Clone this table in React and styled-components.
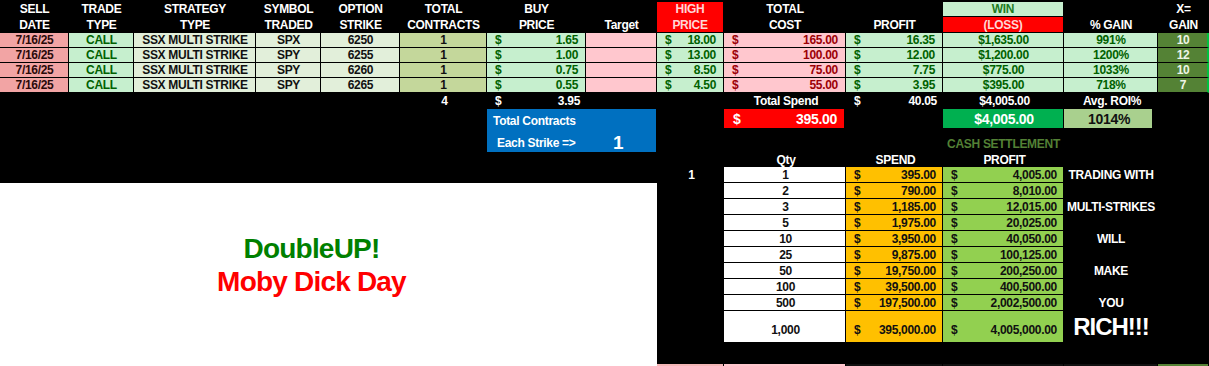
import React from 'react'
import styled, { createGlobalStyle } from 'styled-components'

const GOOD = '#C6EFCE'
const GOOD_TXT = '#006100'
const BAD = '#FFC7CE'
const BAD_TXT = '#9C0006'
const PALE = '#E2EFDA'
const OLIVE = '#C4D79B'
const SALMON = '#F2A4A4'
const DEEP = '#548235'

const GlobalStyle = createGlobalStyle`
  body {
    margin: 0;
    background: #fff;
    font-family: 'Liberation Sans', Arial, sans-serif;
  }
`

// one sheet grid, column widths taken from the spreadsheet
const Sheet = styled.div`
  width: 1209px;
  height: 366px;
  display: grid;
  grid-template-columns: 69px 65px 122px 65px 79px 87px 99px 71px 67px 122px 97px 121px 94px 51px;
  grid-template-rows: 16px 17px repeat(5, 15px) 20px 8px 16px 15px repeat(9, 16px) 32px 20px 3px;
  background: #000;
  overflow: hidden;
  font-weight: bold;
  font-size: 12px;
  letter-spacing: -0.3px;
`

const HeadCell = styled.div`
  grid-row: 1 / 3;
  grid-column: ${p => p.$col};
  display: flex;
  flex-direction: column;
  align-items: center;
  justify-content: center;
  line-height: 16px;
  color: ${p => p.$fg || '#fff'};
  background: ${p => p.$bg || 'transparent'};
  margin: ${p => (p.$bg ? '2px 1px 1px 0' : '0')};
  white-space: nowrap;
`

const HeadBadge = styled.div`
  grid-row: ${p => p.$row};
  grid-column: 12;
  display: flex;
  align-items: center;
  justify-content: center;
  background: ${p => p.$bg};
  color: ${p => p.$fg};
  margin: ${p => (p.$row === 1 ? '2px 1px 0 0' : '1px 1px 1px 0')};
`

const Cell = styled.div`
  grid-row: ${p => p.$row};
  grid-column: ${p => p.$col || 'auto'};
  display: flex;
  align-items: center;
  justify-content: ${p => p.$justify || 'center'};
  padding: 0 7px 0 8px;
  background: ${p => p.$bg || PALE};
  color: ${p => p.$fg || '#111'};
  border-right: ${p => (p.$edge ? '2px solid #00C040' : '1px solid #000')};
  border-bottom: 1px solid #000;
  white-space: nowrap;
  min-width: 0;
  line-height: 14px;
`

const MoneyCell = styled(Cell)`
  justify-content: space-between;
`

const Money = ({ value, ...rest }) => (
  <MoneyCell {...rest}>
    <span>$</span>
    <span>{value}</span>
  </MoneyCell>
)

const Plain = styled.div`
  grid-row: ${p => p.$row};
  grid-column: ${p => p.$col};
  display: flex;
  align-items: center;
  justify-content: ${p => p.$justify || 'center'};
  padding: 0 6px 0 8px;
  color: ${p => p.$fg || '#fff'};
  white-space: nowrap;
`

const BlueBox = styled.div`
  grid-row: 8 / 11;
  grid-column: 7 / 9;
  margin: 1px 1px 0 0;
  background: #0070C0;
  color: #fff;
  display: grid;
  grid-template-rows: 23px 1fr;
`

const BlueLabel = styled.div`
  display: flex;
  align-items: center;
  padding-left: 6px;
`

const BlueStrike = styled.div`
  display: grid;
  grid-template-columns: 116px auto;
  align-items: center;
  padding-left: 10px;
`

const BigOne = styled.span`
  font-size: 19px;
`

const Block = styled.div`
  grid-row: 8;
  grid-column: ${p => p.$col};
  margin: 1px ${p => p.$gapRight || '1px'} 0 0;
  display: flex;
  align-items: center;
  justify-content: ${p => p.$justify || 'center'};
  padding: 0 7px 0 9px;
  background: ${p => p.$bg};
  color: ${p => p.$fg};
  font-size: ${p => p.$size || '14px'};
`

const CashTitle = styled.div`
  grid-row: 10;
  grid-column: 12;
  display: flex;
  align-items: center;
  justify-content: center;
  color: #538135;
  font-size: 12px;
  white-space: nowrap;
`

const CashCell = styled.div`
  grid-row: ${p => p.$row};
  grid-column: ${p => p.$col};
  display: flex;
  align-items: ${p => (p.$tall ? 'flex-end' : 'center')};
  justify-content: ${p => p.$justify || 'center'};
  padding: ${p => (p.$tall ? '0 6px 5px 8px' : '0 6px 0 8px')};
  background: ${p => p.$bg};
  color: #111;
  border-right: 1px solid #000;
  border-bottom: 1px solid #000;
  white-space: nowrap;
  line-height: 14px;
`

const SideWord = styled.div`
  grid-row: ${p => p.$row};
  grid-column: 13;
  display: flex;
  align-items: center;
  justify-content: center;
  color: #fff;
  white-space: nowrap;
  font-size: ${p => (p.$big ? '24px' : '12px')};
  letter-spacing: ${p => (p.$big ? '-1px' : '-0.3px')};
`

const WhitePanel = styled.div`
  grid-row: 13 / 24;
  grid-column: 1 / 9;
  background: #fff;
  display: flex;
  flex-direction: column;
  align-items: center;
  padding: 49px 34px 0 0;
  font-size: 28px;
  line-height: 33px;
  letter-spacing: -0.8px;
`

const Slogan = styled.div`
  color: ${p => p.$fg};
`

const Strip = styled.div`
  grid-row: 23;
  grid-column: ${p => p.$col};
  margin-top: 1px;
  background: ${p => p.$bg};
  border-right: 1px solid #000;
`

const trades = [
  { sym: 'SPX', strike: 6250, buy: '1.65', high: '18.00', cost: '165.00', profit: '16.35', win: '$1,635.00', gain: '991%', x: 10 },
  { sym: 'SPY', strike: 6255, buy: '1.00', high: '13.00', cost: '100.00', profit: '12.00', win: '$1,200.00', gain: '1200%', x: 12 },
  { sym: 'SPY', strike: 6260, buy: '0.75', high: '8.50', cost: '75.00', profit: '7.75', win: '$775.00', gain: '1033%', x: 10 },
  { sym: 'SPY', strike: 6265, buy: '0.55', high: '4.50', cost: '55.00', profit: '3.95', win: '$395.00', gain: '718%', x: 7 },
]

const cash = [
  ['1', '395.00', '4,005.00'],
  ['2', '790.00', '8,010.00'],
  ['3', '1,185.00', '12,015.00'],
  ['5', '1,975.00', '20,025.00'],
  ['10', '3,950.00', '40,050.00'],
  ['25', '9,875.00', '100,125.00'],
  ['50', '19,750.00', '200,250.00'],
  ['100', '39,500.00', '400,500.00'],
  ['500', '197,500.00', '2,002,500.00'],
  ['1,000', '395,000.00', '4,005,000.00'],
]

const words = { 0: 'TRADING WITH', 2: 'MULTI-STRIKES', 4: 'WILL', 6: 'MAKE', 8: 'YOU', 9: 'RICH!!!' }

const heads = [
  ['SELL', 'DATE'],
  ['TRADE', 'TYPE'],
  ['STRATEGY', 'TYPE'],
  ['SYMBOL', 'TRADED'],
  ['OPTION', 'STRIKE'],
  ['TOTAL', 'CONTRACTS'],
  ['BUY', 'PRICE'],
  ['\u00a0', 'Target'],
  ['HIGH', 'PRICE'],
  ['TOTAL', 'COST'],
  ['\u00a0', 'PROFIT'],
  null,
  ['\u00a0', '% GAIN'],
  ['X=', 'GAIN'],
]

export default function App() {
  return (
    <>
      <GlobalStyle />
      <Sheet>
        {heads.map((h, i) =>
          h ? (
            <HeadCell
              key={i}
              $col={i + 1}
              $bg={i === 8 ? '#FF0000' : undefined}
              $fg={i === 8 ? '#FFD6D6' : undefined}
            >
              <span>{h[0]}</span>
              <span>{h[1]}</span>
            </HeadCell>
          ) : null
        )}
        <HeadBadge $row={1} $bg={GOOD} $fg="#1E7B1E">WIN</HeadBadge>
        <HeadBadge $row={2} $bg="#FF0000" $fg="#FFD6D6">(LOSS)</HeadBadge>

        {trades.map((t, i) => {
          const r = i + 3
          return (
            <React.Fragment key={i}>
              <Cell $row={r} $bg={SALMON} $fg="#2a0a0a">7/16/25</Cell>
              <Cell $row={r} $bg={GOOD} $fg={GOOD_TXT}>CALL</Cell>
              <Cell $row={r}>SSX MULTI STRIKE</Cell>
              <Cell $row={r}>{t.sym}</Cell>
              <Cell $row={r}>{t.strike}</Cell>
              <Cell $row={r} $bg={OLIVE}>1</Cell>
              <Money $row={r} $bg={GOOD} $fg={GOOD_TXT} value={t.buy} />
              <Cell $row={r} $bg={BAD} />
              <Money $row={r} $bg={GOOD} $fg={GOOD_TXT} value={t.high} />
              <Money $row={r} $bg={BAD} $fg={BAD_TXT} value={t.cost} />
              <Money $row={r} $bg={GOOD} $fg={GOOD_TXT} value={t.profit} />
              <Cell $row={r} $bg={GOOD} $fg={GOOD_TXT}>{t.win}</Cell>
              <Cell $row={r} $bg={GOOD} $fg={GOOD_TXT}>{t.gain}</Cell>
              <Cell $row={r} $bg={DEEP} $fg="#EEF5E6" $edge>{t.x}</Cell>
            </React.Fragment>
          )
        })}

        <Plain $row={7} $col={6}>4</Plain>
        <Plain $row={7} $col={7} $justify="space-between"><span>$</span><span>3.95</span></Plain>
        <Plain $row={7} $col={10}>Total Spend</Plain>
        <Plain $row={7} $col={11} $justify="space-between"><span>$</span><span>40.05</span></Plain>
        <Plain $row={7} $col={12}>$4,005.00</Plain>
        <Plain $row={7} $col={13}>Avg. ROI%</Plain>

        <BlueBox>
          <BlueLabel>Total Contracts</BlueLabel>
          <BlueStrike>
            <span>Each Strike =&gt;</span>
            <BigOne>1</BigOne>
          </BlueStrike>
        </BlueBox>

        <Block $col={10} $bg="#FF0000" $fg="#fff" $gapRight="2px" $justify="space-between">
          <span>$</span>
          <span>395.00</span>
        </Block>
        <Block $col={12} $bg="#00B050" $fg="#fff">$4,005.00</Block>
        <Block $col={13} $bg="#A9D08E" $fg="#111" $gapRight="6px">1014%</Block>

        <CashTitle>CASH SETTLEMENT</CashTitle>
        <Plain $row={11} $col={10}>Qty</Plain>
        <Plain $row={11} $col={11}>SPEND</Plain>
        <Plain $row={11} $col={12}>PROFIT</Plain>
        <Plain $row={12} $col={9}>1</Plain>

        {cash.map((c, i) => {
          const r = i + 12
          const tall = i === cash.length - 1
          return (
            <React.Fragment key={c[0]}>
              <CashCell $row={r} $col={10} $bg="#fff" $tall={tall}>{c[0]}</CashCell>
              <CashCell $row={r} $col={11} $bg="#FFC000" $tall={tall} $justify="space-between">
                <span>$</span>
                <span>{c[1]}</span>
              </CashCell>
              <CashCell $row={r} $col={12} $bg="#92D050" $tall={tall} $justify="space-between">
                <span>$</span>
                <span>{c[2]}</span>
              </CashCell>
              {words[i] && (
                <SideWord $row={r} $big={i === 9}>{words[i]}</SideWord>
              )}
            </React.Fragment>
          )
        })}

        <WhitePanel>
          <Slogan $fg="#008000">DoubleUP!</Slogan>
          <Slogan $fg="#FF0000">Moby Dick Day</Slogan>
        </WhitePanel>

        <Strip $col={9} $bg="#F4B6B6" />
        <Strip $col={10} $bg={BAD} />
        <Strip $col={11} $bg="#111" />
        <Strip $col={12} $bg="#111" />
        <Strip $col={13} $bg="#111" />
        <Strip $col={14} $bg={DEEP} />
      </Sheet>
    </>
  )
}
